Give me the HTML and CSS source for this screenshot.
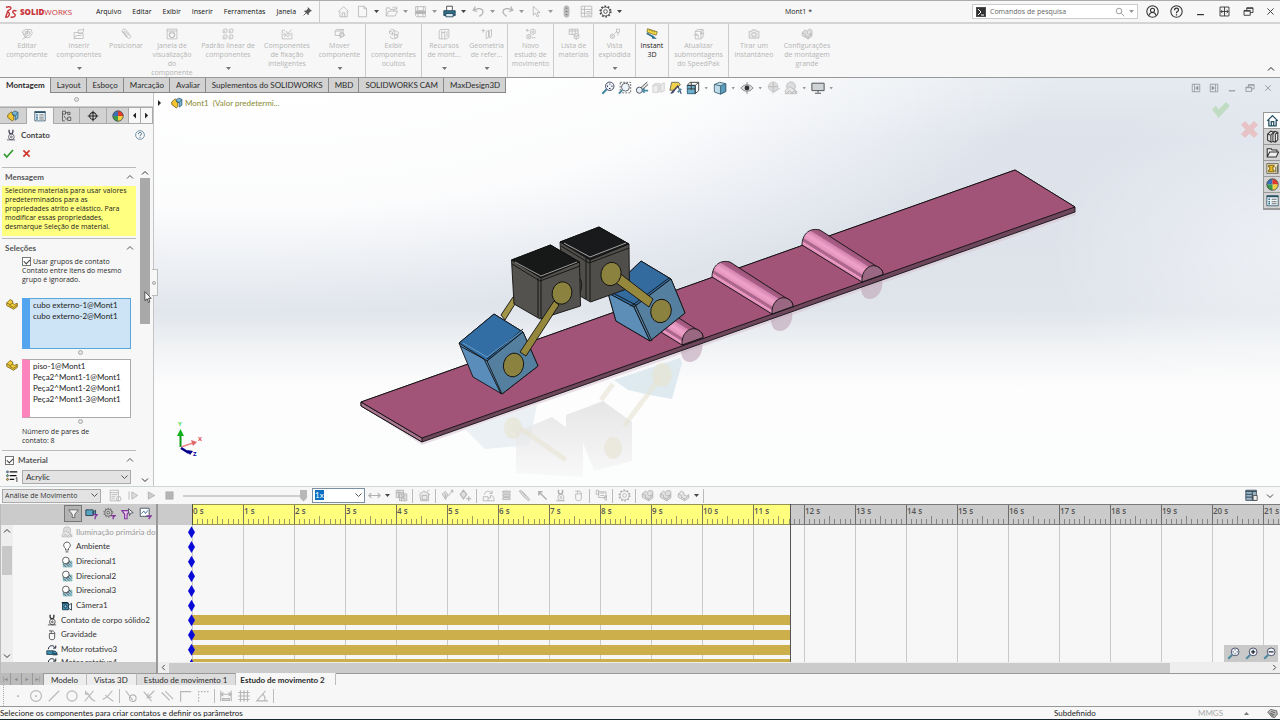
FILE: index.html
```html
<!DOCTYPE html>
<html lang="pt-BR">
<head>
<meta charset="utf-8">
<title>SOLIDWORKS - Mont1</title>
<link rel="stylesheet" href="styles.css">
</head>
<body>
<svg class="sprite" aria-hidden="true">
<defs>
<symbol id="home" viewBox="0 0 16 16"><path d="M1.500 8.500 8 2l6.500 6.500M3.500 7.500V14.500h9V7.500M6.500 14.500v-5h3v5"/></symbol>
<symbol id="new" viewBox="0 0 16 16"><path d="M3 1.500h7l3 3v10H3zM10 1.500v3h3"/></symbol>
<symbol id="open" viewBox="0 0 16 16"><path d="M1.500 13.500v-10h4l1 2h5v2M1.500 13.500l3-6h11l-3 6zM9 3.500c2-2 4-1 5 1M14.500 2v3h-3"/></symbol>
<symbol id="save" viewBox="0 0 16 16"><path d="M2 2h12v12.500H3.500L2 13zM4.500 2v5h7V2M5 14.500V10h6v4.500"/><path d="M2 7.500h12v3H2z" fill="currentColor"/></symbol>
<symbol id="print" viewBox="0 0 16 16"><path d="M4.500 7V1.500h7V7" stroke="#333" fill="#fff"/><path d="M1 7h14v6H1z" fill="#2e6f8b" stroke="#1d3c4c"/><path d="M3.500 10.500h9v4h-9z" fill="#d9ecf3" stroke="#1d3c4c"/></symbol>
<symbol id="undo" viewBox="0 0 16 16"><path d="M4 2 1.500 6.500l5 1.500M2 6.500C7 3 13 4 13.500 8c.3 3-2 4.500-4.500 6" stroke-width="1.500"/></symbol>
<symbol id="redo" viewBox="0 0 16 16"><path d="m12 2 2.500 4.500-5 1.500M14 6.500C9 3 3 4 2.500 8c-.3 3 2 4.500 4.500 6" stroke-width="1.500"/></symbol>
<symbol id="cursor" viewBox="0 0 16 16"><path d="M4 1.500v11l2.700-2.500 2 4.500 2-.8-2-4.400h3.800z"/></symbol>
<symbol id="light" viewBox="0 0 16 16"><rect x="5" y="1" width="6" height="14" rx="3" fill="#bbb"/><path d="M8 3.500v1M8 7.500v1M8 11.500v1" stroke="#777" stroke-width="2"/></symbol>
<symbol id="options" viewBox="0 0 16 16"><path d="M1.500 1.500h13v13h-13zM5.500 1.500v13M1.500 5.500h13M1.500 10h13M8 8h5M8 12.500h5"/></symbol>
<symbol id="gear" viewBox="0 0 16 16"><circle cx="8" cy="8" r="5.500"/><circle cx="8" cy="8" r="2.300"/><circle cx="8" cy="8" r="6.500" stroke-dasharray="2 2.080" stroke-width="2"/></symbol>
<symbol id="pin" viewBox="0 0 16 16"><path d="m9 1 6 6-2 .5-3 3-.5 3.500L2.500 7 6 6.500l3-3z" fill="currentColor"/><path d="m6 10-5 5" stroke-width="1.500"/></symbol>
<symbol id="glass" viewBox="0 0 16 16"><circle cx="6.500" cy="6.500" r="4.500"/><path d="m10 10 5 5"/></symbol>
<symbol id="user" viewBox="0 0 16 16"><circle cx="8" cy="8" r="7"/><circle cx="8" cy="6.500" r="2.500"/><path d="M4 13c0-5 8-5 8 0"/></symbol>
<symbol id="help" viewBox="0 0 16 16"><circle cx="8" cy="8" r="7"/><path d="M5.500 6.500c0-3.500 5-3.500 5-.5 0 2-2.500 1.500-2.500 4M8 11.500v1.500" stroke-width="1.500"/></symbol>
<symbol id="min" viewBox="0 0 16 16"><path d="M3 12.500h10" stroke-width="1.800"/></symbol>
<symbol id="span" viewBox="0 0 16 16"><path d="M1.500 1.500h13v13h-13zM8 1.500v13M3 8h10M5 5.500 2.500 8 5 10.500M11 5.500 13.500 8 11 10.500"/></symbol>
<symbol id="restore" viewBox="0 0 16 16"><path d="M1.500 6.500h9v7h-9zM5.500 6.500v-4h9v7h-4M1.500 7.500h9M5.500 3.500h9"/></symbol>
<symbol id="x" viewBox="0 0 16 16"><path d="m3.500 3.500 9 9m0-9-9 9"/></symbol>
<symbol id="chev" viewBox="0 0 16 16"><path d="m2 5 6 6 6-6"/></symbol>
<symbol id="part" viewBox="0 0 16 16"><path d="m1.500 6 4-3.500 3 2v3l3 1 3-1.500v4l-5 3.500-8-4.500z" fill="#e6e6e6"/><path d="m1.500 6 4 2v2.500l4 1.500 5-3.500M9.500 12v2.500"/></symbol>
<symbol id="parts" viewBox="0 0 16 16"><path d="m1.500 6 4-3.500 3 2v3l3 1 3-1.500v4l-5 3.500-8-4.500zM8.500 3l3-1.500 3 1.500v4l-3 1.500" fill="#dedede"/><path d="m1.500 6 4 2v2.500l4 1.500 5-3.500M9.500 12v2.500"/></symbol>
<symbol id="goldpart" viewBox="0 0 16 16"><path d="M1 6.500 5.500 2 9 4v3l2 1.500L15 7v4.500L10 15 1 10z" fill="#f3cf3a" stroke="#6b5410"/><path d="m1 6.500 4 2V10l5 2.500 5-3.500M5.500 8.500 9 7" stroke="#6b5410"/></symbol>
<symbol id="asm" viewBox="0 0 16 16"><path d="M1 6.500 5.500 2.500 9 5v8l-2 1.500-6-4.500z" fill="#f3c52f" stroke="#6b5410"/><path d="m7 3.500 3-2 4.500 1.500V11L11 13.500V8L7 6z" fill="#7db7d3" stroke="#255a76"/><path d="M7 5.500l4 2 3.500-4" stroke="#255a76"/></symbol>
<symbol id="edit" viewBox="0 0 16 16"><path d="m1.500 5 4-3h8l1.500 5-4 6-6-1zM5 4l3 4M9 3l-1 5 4-3M3 6l4 6-5 3"/><circle cx="9" cy="7" r="3"/></symbol>
<symbol id="insert" viewBox="0 0 16 16"><path d="M1.500 6h5l1 1.500h6V14h-12zM7 5V2.500h5L14 1v4l-2 1.500H7zM4 10h7M1.500 14l3-4"/></symbol>
<symbol id="clip" viewBox="0 0 16 16"><path d="m3 4 7 9c2 2 5 0 4-2.500L8 2.500C6 0 2 2 3 5l6 7.500M12 10 7 4.500C6 3.500 5 4.500 5.500 5.500l4.500 6"/></symbol>
<symbol id="window" viewBox="0 0 16 16"><path d="M1.500 1.500h13v13h-13zM1.500 4h13"/><path d="m5 8 3-2 3 2v3l-3 2-3-2z"/><circle cx="8" cy="9" r="4"/></symbol>
<symbol id="pattern" viewBox="0 0 16 16"><path d="M1.500 2.500l2-1h3v4l-2 1h-3zM9.500 2.500l2-1h3v4l-2 1h-3zM1.500 10.500l2-1h3v4l-2 1h-3zM9.500 10.500l2-1h3v4l-2 1h-3zM3.500 3.500v2M11.500 3.500v2M3.500 11.500v2M11.500 11.500v2"/></symbol>
<symbol id="fix" viewBox="0 0 16 16"><path d="M1.500 3v11.500h13V6.500M1.500 3h4M4 6l3 3M7 4l2 4 5-6M9 8h4M4 12l3-3 2 3 3-3M3 9h3"/></symbol>
<symbol id="move" viewBox="0 0 16 16"><path d="M1.500 4 4 2h8.500v3M1.500 4h8v6h-8zM9.500 4l3-2M12.500 8H9M7 13.500l7.500-4-2-2v-2"/><circle cx="10" cy="9" r="3"/></symbol>
<symbol id="hide" viewBox="0 0 16 16"><path d="m2 4 3-2.500L9 3v4L6 9 2 7zM2 4l4 1.500V9M6 5.500 9 3M3 11c0 3 4 4 7 3l3-3M10 4c3 0 4 2 4 4l-3 2-3-2"/><circle cx="11" cy="11" r="2.500"/></symbol>
<symbol id="feat" viewBox="0 0 16 16"><path d="M1.500 3.500 4 2h10.500v10L12 14.500H1.500zM5 3.500v11M9 3.500v11M5 6h4M12 4v8"/></symbol>
<symbol id="speed" viewBox="0 0 16 16"><path d="M3 4.500 6 2h7.500v10l-3 2.500H3zM3 4.500h7.500v10M10.500 4.500l3-2.500M1 9h5M4 7l2 2-2 2M15 7h-5M12 5l-2 2 2 2M7 9v4"/></symbol>
<symbol id="geom" viewBox="0 0 16 16"><path d="M3 1v5M.500 3.500h5M7 5l3-2v9l-3 2.500zM11 4l3-2v9l-3 2.500z"/></symbol>
<symbol id="gears" viewBox="0 0 16 16"><circle cx="10.500" cy="5" r="3.500"/><circle cx="10.500" cy="5" r="1.200"/><circle cx="5" cy="11.500" r="3"/><circle cx="5" cy="11.500" r="1"/><path d="M1.500 3h4M4 1.500 1.500 3 4 4.500M9 13h5"/></symbol>
<symbol id="bom" viewBox="0 0 16 16"><path d="M1.500 1.500h12v7h-12zM1.500 4h12M5.500 1.500v7M9.500 1.500v7"/><path d="m8 9 3-2 3.500 2v4L11 15l-3-2z" fill="#eee"/><path d="m8 9 3 2 3.500-2M11 11v4"/></symbol>
<symbol id="explode" viewBox="0 0 16 16"><circle cx="4.500" cy="11" r="3"/><circle cx="4.500" cy="11" r="1"/><path d="m7 8 4-4M10 1.500h4v4l-2 1-2-1zM12 6v4"/></symbol>
<symbol id="instant" viewBox="0 0 16 16"><path d="m2 1 13 4-1.500 4.500-12-4z" fill="#f7dc4a" stroke="#7a6a1c"/><path d="M5 2v2M8 3v2M11 4v2" stroke="#7a6a1c"/><path d="m1 7 9 5" stroke="#2b6e91" stroke-width="2"/><path d="m9 9.500 5.500 5-7-.5z" fill="#2b6e91" stroke="none"/></symbol>
<symbol id="camera" viewBox="0 0 16 16"><path d="M1.500 4.500h3l1-2h5l1 2h3v9h-13z" fill="#e9e9e9"/><circle cx="8" cy="9" r="3"/></symbol>
<symbol id="wizard" viewBox="0 0 16 16"><path d="M2 6.500 7 2.500l6 3v9H3.500zM5 8h6v5H5zM11 3l3-1.500M12 6l3 1M2 4 1 3" fill="#e9e9e9"/></symbol>
<symbol id="zoomc" viewBox="0 0 16 16"><circle cx="10" cy="6" r="4.800" fill="#eef5f8" stroke="#335"/><path d="m6.500 9.500-5 5" stroke="#4d8aa3" stroke-width="2.500"/><path d="M10 3.500v5M7.500 6h5" stroke="#223" stroke-width="1.500"/></symbol>
<symbol id="zoomfit" viewBox="0 0 16 16"><circle cx="10" cy="6" r="4.800" fill="#eef5f8" stroke="#335"/><path d="m6.500 9.500-5 5" stroke="#4d8aa3" stroke-width="2.500"/><path d="M10 3v1M10 8v1M7 6h1M12 6h1" stroke="#223" stroke-width="1.500"/></symbol>
<symbol id="zoomout" viewBox="0 0 16 16"><circle cx="10" cy="6" r="4.800" fill="#eef5f8" stroke="#335"/><path d="m6.500 9.500-5 5" stroke="#4d8aa3" stroke-width="2.500"/><path d="M7 6h6" stroke="#223" stroke-width="1.500"/></symbol>
<symbol id="zoomarea" viewBox="0 0 16 16"><path d="M2.500 1.500h12v12h-12z" stroke="#555" stroke-dasharray="2 1.500"/><circle cx="8.500" cy="7" r="4.500" fill="#eef5f8" stroke="#556"/><path d="m5 10.500-4 4" stroke="#4d8aa3" stroke-width="2.200"/></symbol>
<symbol id="prev" viewBox="0 0 16 16"><path d="M14 1 5 9l2 2 8-7" fill="#ddd" stroke="#555"/><circle cx="5" cy="10.500" r="3.500" fill="#e4f0f6" stroke="#445"/><path d="M15 11H9M11 8.500 8.500 11l2.500 2.500" stroke="#4d8aa3" stroke-width="1.800"/></symbol>
<symbol id="section" viewBox="0 0 16 16"><path d="M1 5h6v8H1zM1 5l2-2h6v8l-2 2M10 4l4-2v9l-4 2z" fill="#eee" stroke="#ccc"/></symbol>
<symbol id="views" viewBox="0 0 16 16"><path d="M3 1.500h8l2 3-7 6H1z" fill="#f2d24a" stroke="#665"/><path d="m2 14.500 8-9 4 9M8 8l-4 6" stroke="#446" stroke-width="1.300"/><path d="m10 13 4-4" stroke="#4d8aa3" stroke-width="2"/></symbol>
<symbol id="orient" viewBox="0 0 16 16"><path d="M1.500 5h9v9.500h-9z" fill="#6fb0cd" stroke="#255a76"/><path d="m1.500 5 3-3.500h10V11l-4 3.500V5zM10.500 5l4-3.500M6 1.500V10M1.500 9h9" stroke="#333"/></symbol>
<symbol id="display" viewBox="0 0 16 16"><path d="m1.500 4 6-2.500 7 1.500v9l-6 3-7-2.500z" fill="#bfdde9" stroke="#3c6277"/><path d="M8.500 5.500v9.500l6-3V3z" fill="#5a9cba" stroke="#3c6277"/><path d="m1.500 4 7 1.500" stroke="#3c6277"/></symbol>
<symbol id="eye" viewBox="0 0 16 16"><path d="M1 8c4-5 10-5 14 0-4 5-10 5-14 0z" fill="#ddd" stroke="#777"/><circle cx="8" cy="8" r="2.800" fill="#333" stroke="none"/><path d="M8 1v3M8 12v3" stroke="#888"/></symbol>
<symbol id="sphere" viewBox="0 0 16 16"><circle cx="7" cy="6.500" r="5.500" fill="#ddd" stroke="#ccc"/><path d="M7 1v11M1.500 6.500h11M6 14l9-6" stroke="#bbb"/></symbol>
<symbol id="scene" viewBox="0 0 16 16"><circle cx="8" cy="6" r="5" fill="#ddd" stroke="#bbb"/><path d="M1.500 14.500v-4l5-4 8 5v3z" fill="#e6e6e6" stroke="#bbb"/><path d="m3 14 3-3 3 3 3-3 2 3" stroke="#aaa"/></symbol>
<symbol id="monitor" viewBox="0 0 16 16"><path d="M1 2.500h14v8.500H1z" fill="#cfd4d6" stroke="#444"/><path d="M8 11v2.500M4.500 14h7" stroke="#444"/></symbol>
<symbol id="paneL" viewBox="0 0 16 16"><path d="M2 2h12v12H2zM5.500 2v12"/><path d="M11 5v6L7.500 8z" fill="currentColor"/></symbol>
<symbol id="paneR" viewBox="0 0 16 16"><path d="M2 2h12v12H2zM10.500 2v12"/><path d="M5 5v6l3.500-3z" fill="currentColor"/></symbol>
<symbol id="props" viewBox="0 0 16 16"><path d="M1 2h14v12.500H1z" fill="#eef6fa" stroke="#2e5266"/><path d="M1 3h14" stroke="#2e5266" stroke-width="2"/><path d="M3 6.500h2M3 9.500h2M3 12h2" stroke="#2b6e91" stroke-width="2"/><path d="M7 6.500h6M7 9.500h6M7 12h6" stroke="#555"/></symbol>
<symbol id="config" viewBox="0 0 16 16"><path d="M2 1.500h4v4H2zM9 3h3v3H9zM9 9.500h4v4.500H9zM2 5.500v9h3M6 3.500h3M6 12h3M4 8l2 3" stroke="#444"/></symbol>
<symbol id="target" viewBox="0 0 16 16"><circle cx="8" cy="8" r="4.500" stroke="#222" stroke-width="1.400"/><path d="M8 1v14M1 8h14" stroke="#222" stroke-width="1.400"/></symbol>
<symbol id="ball" viewBox="0 0 16 16"><g stroke="none"><path d="M8 8V1a7 7 0 0 0-7 7z" fill="#3a70b8"/><path d="M8 8V1a7 7 0 0 1 7 7z" fill="#e23b2e"/><path d="M8 8h7a7 7 0 0 1-7 7z" fill="#efd13d"/><path d="M8 8H1a7 7 0 0 0 7 7z" fill="#3c9a4b"/></g><circle cx="8" cy="8" r="7" stroke="#444"/></symbol>
<symbol id="contact" viewBox="0 0 16 16"><path d="M5.500 1v3c0 3 5 3 5 0V1" stroke-width="1.800"/><circle cx="8.500" cy="10.500" r="3.800"/><circle cx="8.500" cy="10.500" r="1.200"/><path d="M2.500 14.500h11"/></symbol>
<symbol id="check" viewBox="0 0 16 16"><path d="m1.500 8.500 4 4.500 9-10" stroke-width="2.400"/></symbol>
<symbol id="mat" viewBox="0 0 16 16"><path d="M5 2.500h10M5 7.500h9M5 12.500h6" stroke="#111" stroke-width="1.500"/><circle cx="2" cy="2.500" r="1.300" fill="#8ac" stroke="#345"/><circle cx="2" cy="7.500" r="1.300" fill="#6c6" stroke="#345"/><circle cx="2" cy="12.500" r="1.300" fill="#dc4" stroke="#543"/><path d="m13 11 1.500-1v6" stroke="#111"/></symbol>
<symbol id="books" viewBox="0 0 16 16"><path d="m2 5 4-3.500 3 1 2-1 3.500 1.500v9l-3 3-3-1-2 1L2 12.500zM2 5l4 1.500v8M8.500 5.500v9M11.500 5v10M6 6.500l3-4M8.500 5.500l2.500-4M11.500 5l3-2" fill="#e8e8e8" stroke-width="1.300"/></symbol>
<symbol id="folder" viewBox="0 0 16 16"><path d="M1.500 13.500v-10h5l1 1.500h6v2.500M1.500 13.500l3-6H15.500l-3 6z" fill="#eee" stroke-width="1.300"/></symbol>
<symbol id="palette" viewBox="0 0 16 16"><path d="M1 2h14v12H1z" fill="#f5ecc0" stroke="#555"/><path d="M3 4h7v2H8.500v4H10v2H3v-2h1.500V6H3z" fill="#e6b824" stroke="#6b5410"/><path d="M12 6v7M14 4v9" stroke="#444"/></symbol>
<symbol id="calc" viewBox="0 0 16 16"><path d="M1.500 1.500h10v13h-10zM1.500 4.500h10M3 7h7M3 9.500h5M3 12h4"/><circle cx="12" cy="12" r="2.800"/></symbol>
<symbol id="playstart" viewBox="0 0 16 16"><path d="M2.500 3v10"/><path d="m6 3.500 7 4.500-7 4.500z" fill="#ddd"/></symbol>
<symbol id="play" viewBox="0 0 16 16"><path d="m4 3.500 8 4.500-8 4.500z" fill="#ccc"/></symbol>
<symbol id="stop" viewBox="0 0 16 16"><path d="M3.500 3.500h9v9h-9z" fill="#b4b4b4"/></symbol>
<symbol id="range" viewBox="0 0 16 16"><path d="M1 8h14M4 5 1 8l3 3M12 5l3 3-3 3" stroke-width="1.400"/></symbol>
<symbol id="film" viewBox="0 0 16 16"><path d="M1.500 1.500h9v9h-9zM4.500 1.500v9M1.500 4.500h9M5.500 6h9v8.500h-9zM8 6v3h4V6M8 14.500v-3h4v3" fill="#e2e2e2"/></symbol>
<symbol id="key1" viewBox="0 0 16 16"><path d="m1.500 6 4-3 3 4-3 6zM9 9l5-7.500M12 1.500h2.500v3M5.500 6v5" fill="#ddd"/></symbol>
<symbol id="key2" viewBox="0 0 16 16"><path d="m5.500 1.500 4 5-4 6-4-6zM12 9v6M9 12h6" fill="#ddd" stroke-width="1.300"/></symbol>
<symbol id="motor" viewBox="0 0 16 16"><path d="M1.500 9.500h6v5h-6zM7.500 11h3V8c3 0 4.500 2 4.500 6.500H7.500M3 7c0-4 6-6 9-2M12.500 2v3.500H9"/></symbol>
<symbol id="motorc" viewBox="0 0 16 16"><path d="M1 9h8v5H1zM9 9c4 0 6 2 6 5.500H9" fill="#3a8fab" stroke="#234"/><path d="M3 7c1-6 7-6 9-2M13 2v3.500H9.500M10 12l2 2 2-2" stroke="#123" stroke-width="1.300"/></symbol>
<symbol id="spring" viewBox="0 0 16 16"><path d="M3.500 2.500h9v2.500h-9zM3.500 6.500h9V9h-9zM3.500 10.500h9V13h-9z" fill="#ddd"/></symbol>
<symbol id="damper" viewBox="0 0 16 16"><path d="m1.500 2.500 2-1 6 6 5 5.500-1.500 1.500-6-5zM5 3l5 6" fill="#ddd"/></symbol>
<symbol id="force" viewBox="0 0 16 16"><path d="m13 13-9-9M3.500 8V3.500H8" stroke-width="1.800"/></symbol>
<symbol id="gravity" viewBox="0 0 16 16"><path d="M4.500 6h7v6c0 3-7 3-7 0zM4 2.500h3v3M12 6c-1-3-3-4-5-3.500"/></symbol>
<symbol id="results" viewBox="0 0 16 16"><path d="M1.500 1.500h3v5h-3zM4.500 3.500h9v7h-9zM6.500 5h5M6.500 8h5M11 10l3-2v6l-3-2z"/></symbol>
<symbol id="studyp" viewBox="0 0 16 16"><path d="M1 1.500h13V14H1z" fill="#9ab6c4" stroke="#345"/><path d="M1 3h13M1 6.500h8M1 10h8M9 3v11" stroke="#234"/><path d="M10 8h5v6h-5z" fill="#eee" stroke="#444"/></symbol>
<symbol id="funnel" viewBox="0 0 16 16"><path d="M2 3.500h12L9.500 9v4h-3V9z" fill="#f4f4f4" stroke="#555"/></symbol>
<symbol id="funcam" viewBox="0 0 16 16"><path d="M1 3.500h9v7H1zM10 6l3-2v6l-3-2z" fill="#57a5c1" stroke="#234"/><path d="M9 9.500h6l-2.500 3V15" stroke="#83369e" stroke-width="1.600"/></symbol>
<symbol id="fungear" viewBox="0 0 16 16"><circle cx="6.500" cy="7" r="4.500" stroke="#555"/><circle cx="6.500" cy="7" r="5.500" stroke="#555" stroke-dasharray="1.500 2"/><circle cx="6.500" cy="7" r="1.800" stroke="#555"/><path d="M9.500 10.500h5.500l-2.500 2V15" stroke="#83369e" stroke-width="1.600"/></symbol>
<symbol id="funsel" viewBox="0 0 16 16"><path d="M1 4.500h10L7.500 9v5.500h-3V9z" fill="#e7cbed" stroke="#83369e" stroke-width="1.400"/><path d="m9 2 6 5-3 .5-1.500 3z" fill="#fff" stroke="#445"/></symbol>
<symbol id="funres" viewBox="0 0 16 16"><path d="M1.500 1.500h11v10h-11z" fill="#fff" stroke="#345"/><path d="m3 8 3-3 2 3 3-4" stroke="#258"/><path d="M9 11h6l-2.500 2.500V15" stroke="#83369e" stroke-width="1.600"/></symbol>
<symbol id="bulb" viewBox="0 0 16 16"><path d="M6 12V10C1.500 6 4 1.500 8 1.500S14.500 6 10 10v2zM6 14.500h4" stroke="#333" fill="#fff"/></symbol>
<symbol id="dir" viewBox="0 0 16 16"><path d="M3 7h11.500v7.500H3z" fill="#9fd0e4" stroke="#6aa"/><circle cx="6.500" cy="6" r="4.500" fill="#fff" stroke="#333"/><path d="m6 10 5 4M8 8.500l5 4M10 6l4 4M3 11l4 3.500" stroke="#444"/></symbol>
<symbol id="cam" viewBox="0 0 16 16"><path d="M2 4h8v9H2z" fill="#3a8fab" stroke="#123"/><path d="M1 3.500h8" stroke="#123" stroke-width="1.600"/><path d="m10 7 4-2.500v9L10 11z" fill="#e2f2f8" stroke="#123"/><circle cx="6" cy="8.500" r="2" fill="#8bd" stroke="#123"/></symbol>
<symbol id="point" viewBox="0 0 16 16"><path d="M7 8h2" stroke-width="2"/></symbol>
<symbol id="circ" viewBox="0 0 16 16"><circle cx="8" cy="8" r="5.800"/></symbol>
<symbol id="circc" viewBox="0 0 16 16"><circle cx="8" cy="8" r="6.200"/><path d="M7 8h2" stroke-width="2"/></symbol>
<symbol id="line" viewBox="0 0 16 16"><path d="M2 14 14 2"/></symbol>
<symbol id="inter" viewBox="0 0 16 16"><path d="m2 14 5-6 5-6M3 4c3 0 4 3 5 5s3 4 6 5M3 2v4h4"/></symbol>
<symbol id="angle" viewBox="0 0 16 16"><path d="M13 2 7 9l-5 3M7 9l7 5M5 7l2 2"/></symbol>
<symbol id="tan" viewBox="0 0 16 16"><circle cx="10" cy="10.500" r="3.800"/><path d="m2 2 8 11"/></symbol>
<symbol id="perp" viewBox="0 0 16 16"><path d="m2 3 9 11M14 2 7 9M7 5l-1 5 5-1"/></symbol>
<symbol id="para" viewBox="0 0 16 16"><path d="m2 4 9 9M6 2.500l9 9"/></symbol>
<symbol id="corner" viewBox="0 0 16 16"><path d="M3 14.500V3h12"/></symbol>
<symbol id="dots" viewBox="0 0 16 16"><path d="M3 14.500V3h12" stroke-dasharray="2 1.500"/></symbol>
<symbol id="dim" viewBox="0 0 16 16"><path d="M2 2v12M14 2v12M2 6h12M4 11h8v2H4zM5 4 2 6l3 2M11 4l3 2-3 2"/></symbol>
<symbol id="gridi" viewBox="0 0 16 16"><path d="M4 1.500v13M8 1.500v13M12 1.500v13M1.500 4h13M1.500 8h13M1.500 12h13"/></symbol>
<symbol id="ang" viewBox="0 0 16 16"><path d="M12 2 2 13.500h13M9 6c2 2 3 5 2 7.500"/></symbol>
<symbol id="tag" viewBox="0 0 16 16"><path d="m1 6 4-4 9 2 1 5-4 5-4-1z" fill="#bbb" stroke="#444"/><path d="m4 7 7 3M6 5l6 2M5 9l5 3" stroke="#444"/></symbol>
<pattern id="tickmarks" width="51" height="21" patternUnits="userSpaceOnUse">
<path d="M5.500 15v5M10.500 15v5M15.500 15v5M20.500 15v5M30.500 15v5M36.500 15v5M41.500 15v5M46.500 15v5M25.500 12v8" stroke="#555" stroke-opacity=".6" fill="none"/><path d="M.5 1v19" stroke="#555" stroke-opacity=".8"/>
</pattern>
</defs>
</svg>

<header class="titlebar">
<a class="brand" href="#" aria-label="SOLIDWORKS"><svg class="ds" viewBox="0 0 14 14"><path d="M2 2.500c3-1.500 6-.5 4.500 1.500L3 6.500M1.500 12.500 3.500 7c3 0 2.500 5-2 5.500M12.500 6C9 4.500 7.500 7 10 8.500S11 13 6.500 12"/></svg><b>SOLID</b><span>WORKS</span></a>
<nav class="menus"><button>Arquivo</button><button>Editar</button><button>Exibir</button><button>Inserir</button><button>Ferramentas</button><button>Janela</button></nav>
<button class="pin" aria-label="Fixar"><svg><use href="#pin"/></svg></button>
<div class="quick">
<button class="qi home" aria-label="Início"><svg><use href="#home"/></svg></button>
<button class="qi" aria-label="Novo"><svg><use href="#new"/></svg></button><i class="caret dark"></i>
<button class="qi" aria-label="Abrir"><svg><use href="#open"/></svg></button><i class="caret"></i>
<button class="qi" aria-label="Salvar"><svg><use href="#save"/></svg></button><i class="caret"></i>
<button class="qi" aria-label="Imprimir"><svg><use href="#print"/></svg></button><i class="caret dark"></i>
<button class="qi" aria-label="Desfazer"><svg><use href="#undo"/></svg></button><i class="caret"></i>
<button class="qi" aria-label="Refazer"><svg><use href="#redo"/></svg></button><i class="caret"></i>
<button class="qi" aria-label="Selecionar"><svg><use href="#cursor"/></svg></button><i class="caret"></i>
<button class="qi wide" aria-label="Reconstruir"><svg><use href="#light"/></svg></button>
<button class="qi wide" aria-label="Propriedades"><svg><use href="#options"/></svg></button>
<button class="qi dark" aria-label="Opções"><svg><use href="#gear"/></svg></button><i class="caret dark"></i>
</div>
<h1 class="doc">Mont1 *</h1>
<label class="search"><svg class="cmd" viewBox="0 0 10 10"><rect width="10" height="10" fill="#333"/><path d="m2 2 3 3-3 3M5 8h3" stroke="#fff"/></svg><input type="text" placeholder="Comandos de pesquisa" aria-label="Comandos de pesquisa"><svg class="lens"><use href="#glass"/></svg><i class="caret"></i></label>
<div class="winbtns">
<button aria-label="Usuário"><svg class="big"><use href="#user"/></svg></button><button aria-label="Ajuda"><svg class="big"><use href="#help"/></svg></button><button aria-label="Minimizar"><svg><use href="#min"/></svg></button><button aria-label="Expandir"><svg><use href="#span"/></svg></button><button aria-label="Restaurar"><svg><use href="#restore"/></svg></button><button aria-label="Fechar"><svg><use href="#x"/></svg></button>
</div>
</header>

<section class="ribbon">
<button class="w54"><svg><use href="#edit"/></svg><span>Editar<br>componente</span></button>
<button class="w50"><svg><use href="#insert"/></svg><span>Inserir<br>componentes</span><i class="caret"></i></button>
<button class="w44"><svg><use href="#clip"/></svg><span>Posicionar</span></button>
<button class="w48"><svg><use href="#window"/></svg><span>Janela de<br>visualização<br>do<br>componente</span></button>
<button class="w64"><svg><use href="#pattern"/></svg><span>Padrão linear de<br>componentes</span><i class="caret"></i></button>
<button class="w54"><svg><use href="#fix"/></svg><span>Componentes<br>de fixação<br>inteligentes</span></button>
<button class="w52 end"><svg><use href="#move"/></svg><span>Mover<br>componente</span><i class="caret"></i></button>
<button class="w56 end"><svg><use href="#hide"/></svg><span>Exibir<br>componentes<br>ocultos</span></button>
<button class="w44"><svg><use href="#feat"/></svg><span>Recursos<br>de mont...</span><i class="caret"></i></button>
<button class="w42 end"><svg><use href="#geom"/></svg><span>Geometria<br>de refer...</span><i class="caret"></i></button>
<button class="w46 end"><svg><use href="#gears"/></svg><span>Novo<br>estudo de<br>movimento</span></button>
<button class="w40 end"><svg><use href="#bom"/></svg><span>Lista de<br>materiais</span></button>
<button class="w42 end"><svg><use href="#explode"/></svg><span>Vista<br>explodida</span><i class="caret"></i></button>
<button class="w33 end on"><svg><use href="#instant"/></svg><span>Instant<br>3D</span></button>
<button class="w60 end"><svg><use href="#speed"/></svg><span>Atualizar<br>submontagens<br>do SpeedPak</span></button>
<button class="w50"><svg><use href="#camera"/></svg><span>Tirar um<br>instantâneo</span></button>
<button class="w56"><svg><use href="#parts"/></svg><span>Configurações<br>de montagem<br>grande</span></button>
<button class="collapse" aria-label="Recolher"><svg><use href="#chev"/></svg></button>
</section>

<main class="stage">
<svg class="model" viewBox="0 78 1280 408" preserveAspectRatio="xMinYMin slice" role="img" aria-label="Modelo 3D">
<defs>
<linearGradient id="sky" x1="0" y1="0" x2="0" y2="1"><stop offset="0" stop-color="#e6ebf0"/><stop offset=".15" stop-color="#dde2eb"/><stop offset=".4" stop-color="#dee3eb"/><stop offset=".57" stop-color="#e0e5eb"/><stop offset=".66" stop-color="#f1f3f5"/><stop offset=".76" stop-color="#fdfdfd"/><stop offset="1" stop-color="#fcfdfd"/></linearGradient>
<radialGradient id="glow" gradientUnits="userSpaceOnUse" cx="0" cy="0" r="1" gradientTransform="matrix(780 -40 60 235 280 80)"><stop offset="0" stop-color="#fff"/><stop offset=".55" stop-color="#fff" stop-opacity=".9"/><stop offset="1" stop-color="#fff" stop-opacity="0"/></radialGradient>
<radialGradient id="glow2" gradientUnits="userSpaceOnUse" cx="0" cy="0" r="1" gradientTransform="matrix(240 0 0 170 1290 250)"><stop offset="0" stop-color="#fff" stop-opacity=".45"/><stop offset="1" stop-color="#fff" stop-opacity="0"/></radialGradient>
<linearGradient id="tube" gradientUnits="userSpaceOnUse" x1="846" y1="246" x2="833" y2="267"><stop offset="0" stop-color="#9c5379"/><stop offset=".22" stop-color="#a95f87"/><stop offset=".24" stop-color="#d283ae"/><stop offset=".45" stop-color="#f0a3ca"/><stop offset=".62" stop-color="#e192bb"/><stop offset=".66" stop-color="#a96288"/><stop offset=".76" stop-color="#b26b91"/><stop offset=".78" stop-color="#ef9cc8"/><stop offset=".88" stop-color="#dc8db5"/><stop offset=".91" stop-color="#a5587f"/><stop offset="1" stop-color="#9c5076"/></linearGradient>
<linearGradient id="fade" x1="0" y1="0" x2="0" y2="1"><stop offset="0" stop-color="#dcdcde"/><stop offset="1" stop-color="#f6f6f7"/></linearGradient>
<g id="bump"><path d="M802 245C802 236 808 227 820 230L876 266C881 268 883 271 883 274.500L862 282z" fill="url(#tube)"/><path d="M862 282C861 271 869 264 876 266 881 268 883 271 883 274.500z" fill="#9b6884"/></g>
</defs>
<rect y="78" width="1280" height="408" fill="url(#sky)"/><rect y="78" width="1280" height="408" fill="url(#glow)"/><rect y="78" width="1280" height="408" fill="url(#glow2)"/>
<path d="m363 407 59 38 654-230v-5L422 440z" fill="#d9c3d1" opacity=".55"/>
<g fill="#bfa3b7" opacity=".6"><path d="M861 286l21-7c2 12-5 20-12 20s-9-6-9-13M771 318l21-7c2 12-5 20-12 20s-9-6-9-13M681 349l21-7c2 12-5 20-12 20s-9-6-9-13"/></g>
<path d="m614 380 66-22 2 5-10 36-22-4-22-5z" fill="#dfeaf0"/><path d="m465 429 72-24-8 40-44 4z" fill="#eaf0f3"/>
<path d="m566 415 37-14 29 21v39l-38 10-11-28-17-16zM516 432l36-15 31 23v37l-67-4z" fill="url(#fade)" opacity=".7"/>
<path d="m613 384-12 16M660 378l-36 48M520 428l46 32" stroke="#e8e5d4" stroke-width="5" opacity=".6"/><g fill="#e8e4d0" opacity=".6"><ellipse cx="662" cy="375" rx="10" ry="12"/><ellipse cx="513" cy="428" rx="9" ry="11"/><ellipse cx="613" cy="448" rx="9" ry="11"/></g>
<g stroke="#111" stroke-width=".9" stroke-linejoin="round">
<path d="M361 402v4l61 36 653-230v-5l-60-37z" fill="#6e475d"/><path d="M361 402v4l61 36v-4z" fill="#a87892"/><path d="m361 402 654-232 60 37-653 231z" fill="#a25478"/>
<use href="#bump"/><use href="#bump" x="-90" y="32"/><use href="#bump" x="-180" y="63"/>
<path d="m513 297-12 18 4 5 15-24z" fill="#a39548"/>
<path d="m608 293 33-32 30 18 14 34-35 28-34-20z" fill="#5b8dba"/><path d="m608 293 33-32 30 18-37 28z" fill="#336b9f"/><path d="m608 293 26 14 16 34-34-20z" fill="#5c8eb8"/><path d="m634 307 37-28 14 34-35 28z" fill="#557f9f"/><path d="m630 306 5-2 17 37M611 292l23 12 35-26" fill="none"/>
<path d="m560 242 39-15 30 17 .5 44-39 14-28-16z" fill="#4f4e4a"/><path d="m560 242 39-15 30 17-39 16z" fill="#191a1b"/><path d="M590 260v41M586 258v41M561 246l28 17 40-15M579 278c4 2 3 13 0 15" fill="none"/><path d="m564 243 26 14 36-14" stroke="#b4b4b0" fill="none"/>
<path d="m511.500 260 39-15 29 17 1 44-40.500 13-26-15z" fill="#53524e"/><path d="m511.500 260 39-15 29 17-38.500 16z" fill="#171818"/><path d="M541 278v40M538 278v39M512 264l28 17 40-15" fill="none"/><path d="m515 262 26 14 36-14" stroke="#aaa9a5" fill="none"/>
<path d="m459 343 35-29 29 18 15 34-36 28-29-17z" fill="#5b8dba"/><path d="m459 343 35-29 29 18-36 29z" fill="#326da3"/><path d="m487 361 36-29 15 34-36 28z" fill="#557f9f"/><path d="m460 346 24 13 17 35M487 359l36-30" fill="none"/><path d="m463 343 24 14 35-26" stroke="#6ca0c7" fill="none"/>
<path d="m554 301-34 51 6 4 33-51z" fill="#95873c"/><path d="m618 272 35 27-4 8-34-25z" fill="#95873c"/>
<g fill="#8c823f"><ellipse cx="562" cy="293" rx="9.800" ry="11.300" transform="rotate(15 562 293)"/><ellipse cx="513.500" cy="365" rx="10" ry="12" transform="rotate(15 513.500 365)"/><ellipse cx="611" cy="274" rx="10" ry="11.800" transform="rotate(15 611 274)"/><ellipse cx="661" cy="311" rx="10.200" ry="11.800" transform="rotate(15 661 311)"/></g>
</g>
<g fill="none"><path d="M180.500 447v-13" stroke="#0a9a14" stroke-width="2"/><path d="m177 436 3.500-7 3.500 7z" fill="#10b01c"/><path d="m181 447 12-4" stroke="#e88" stroke-width="1.500"/><path d="m191 440 6 2-4 4z" fill="#d66"/><path d="m181 448 8 5" stroke="#00008b" stroke-width="2.500"/><path d="m187 450 6 1-3 4z" fill="#00008b"/></g>
<g class="axis"><text x="178" y="426" fill="#5d5">Y</text><text x="198" y="441" fill="#d44">X</text><text x="193" y="456" fill="#00a">Z</text></g>
</svg>

<div class="toprow">
<nav class="cmdtabs"><button class="sel">Montagem</button><button>Layout</button><button>Esboço</button><button>Marcação</button><button>Avaliar</button><button>Suplementos do SOLIDWORKS</button><button>MBD</button><button>SOLIDWORKS CAM</button><button>MaxDesign3D</button></nav>
<div class="hud">
<button aria-label="Zoom"><svg><use href="#zoomfit"/></svg></button><button aria-label="Zoom na área"><svg><use href="#zoomarea"/></svg></button><button aria-label="Vista anterior"><svg><use href="#prev"/></svg></button><button aria-label="Seção"><svg><use href="#section"/></svg></button><button aria-label="Vistas"><svg><use href="#views"/></svg></button><button aria-label="Orientação"><svg><use href="#orient"/></svg></button><i class="caret"></i><button aria-label="Estilo"><svg><use href="#display"/></svg></button><i class="caret"></i><button aria-label="Ocultar"><svg><use href="#eye"/></svg></button><i class="caret"></i><button aria-label="Aparência"><svg><use href="#sphere"/></svg></button><button aria-label="Cena"><svg><use href="#scene"/></svg></button><i class="caret"></i><button aria-label="Exibição"><svg><use href="#monitor"/></svg></button><i class="caret"></i>
</div>
<div class="docbtns"><button aria-label="Painel esquerdo"><svg><use href="#paneL"/></svg></button><button aria-label="Painel direito"><svg><use href="#paneR"/></svg></button><button aria-label="Minimizar documento"><svg><use href="#min"/></svg></button><button aria-label="Restaurar documento"><svg><use href="#restore"/></svg></button><button aria-label="Fechar documento"><svg><use href="#x"/></svg></button></div>
</div>

<div class="work">
<aside class="panel">
<div class="grip"><i class="dot"></i></div>
<nav class="ptabs"><button aria-label="Árvore"><svg><use href="#asm"/></svg></button><button class="sel" aria-label="Propriedades"><svg><use href="#props"/></svg></button><button aria-label="Configurações"><svg><use href="#config"/></svg></button><button aria-label="DimXpert"><svg><use href="#target"/></svg></button><button aria-label="Exibição"><svg><use href="#ball"/></svg></button><button class="arr" aria-label="Anterior"><i class="tri l"></i></button><button class="arr" aria-label="Próximo"><i class="tri"></i></button></nav>
<div class="ptitle"><svg><use href="#contact"/></svg><h2>Contato</h2><button aria-label="Ajuda"><svg><use href="#help"/></svg></button></div>
<div class="okrow"><button class="ok" aria-label="OK"><svg><use href="#check"/></svg></button><button class="no" aria-label="Cancelar"><svg><use href="#x"/></svg></button></div>
<div class="pscroll">
<div class="pbody">
<section class="msgsec"><h3>Mensagem<svg class="up"><use href="#chev"/></svg></h3>
<p class="msg">Selecione materiais para usar valores<br>predeterminados para as<br>propriedades atrito e elástico. Para<br>modificar essas propriedades,<br>desmarque Seleção de material.</p></section>
<section class="selsec"><h3>Seleções<svg class="up"><use href="#chev"/></svg></h3>
<label class="chk"><input type="checkbox" checked>Usar grupos de contato</label>
<p class="note">Contato entre itens do mesmo<br>grupo é ignorado.</p>
<div class="pick"><svg><use href="#goldpart"/></svg><ul class="blue"><li>cubo externo-1@Mont1</li><li>cubo externo-2@Mont1</li></ul></div>
<i class="dot"></i>
<div class="pick second"><svg><use href="#goldpart"/></svg><ul class="pink"><li>piso-1@Mont1</li><li>Peça2^Mont1-1@Mont1</li><li>Peça2^Mont1-2@Mont1</li><li>Peça2^Mont1-3@Mont1</li></ul></div>
<i class="dot"></i>
<p class="note">Número de pares de<br>contato: 8</p></section>
<section class="matsec"><h3><label class="chk"><input type="checkbox" checked>Material</label><svg class="up"><use href="#chev"/></svg></h3>
<div class="matrow"><svg><use href="#mat"/></svg><select aria-label="Material"><option>Acrylic</option></select></div></section>
</div>
<div class="vscroll"><svg class="up"><use href="#chev"/></svg><i></i><svg><use href="#chev"/></svg></div>
</div>
</aside>
<section class="view">
<div class="crumb"><i class="tri"></i><svg><use href="#asm"/></svg><span>Mont1&nbsp; (Valor predetermi...</span></div>
<div class="handle"><i class="dot"></i></div>
<svg class="pointer" viewBox="0 0 10 14"><path d="M1 1v10l2.500-2 1.500 4 1.500-.6-1.500-3.900h3z" fill="#fff" stroke="#222" stroke-width=".8"/></svg>
<button class="vok" aria-label="Confirmar"><svg viewBox="0 0 20 17"><path d="m1 8 4-4 3 4 8-8 4 4-12 13z" fill="#c0dcc3"/></svg></button>
<button class="vno" aria-label="Cancelar"><svg viewBox="0 0 17 17"><path d="m4 0 4.500 4.500L13 0l4 4-4.500 4.500L17 13l-4 4-4.500-4.500L4 17l-4-4 4.500-4.500L0 4z" fill="#e8c3c6"/></svg></button>
<nav class="task"><button class="sel" aria-label="Início"><svg class="teal"><use href="#home"/></svg></button><button aria-label="Biblioteca"><svg><use href="#books"/></svg></button><button aria-label="Explorador"><svg><use href="#folder"/></svg></button><button aria-label="Paleta"><svg><use href="#palette"/></svg></button><button aria-label="Aparências"><svg><use href="#ball"/></svg></button><button aria-label="Propriedades"><svg><use href="#props"/></svg></button></nav>
</section>
</div>
</main>

<section class="motion">
<div class="mtools">
<select class="study" aria-label="Tipo de estudo"><option>Análise de Movimento</option></select>
<button aria-label="Calcular"><svg><use href="#calc"/></svg></button><button aria-label="Do início"><svg><use href="#playstart"/></svg></button><button aria-label="Reproduzir"><svg><use href="#play"/></svg></button><button aria-label="Parar"><svg><use href="#stop"/></svg></button>
<input class="seek" type="range" value="100" aria-label="Tempo">
<span class="speed"><select aria-label="Velocidade"><option>1x</option></select><mark>1x</mark></span>
<button class="rng" aria-label="Modo"><svg><use href="#range"/></svg></button><i class="caret dark"></i>
<button aria-label="Salvar animação"><svg><use href="#film"/></svg></button><i class="sep"></i>
<button aria-label="Assistente"><svg><use href="#wizard"/></svg></button><i class="sep"></i>
<button aria-label="Chave automática"><svg><use href="#key1"/></svg></button><button aria-label="Adicionar chave"><svg><use href="#key2"/></svg></button><i class="sep"></i>
<button aria-label="Motor"><svg><use href="#motor"/></svg></button><button aria-label="Mola"><svg><use href="#spring"/></svg></button><button aria-label="Amortecedor"><svg><use href="#damper"/></svg></button><button aria-label="Força"><svg><use href="#force"/></svg></button><button aria-label="Contato"><svg><use href="#contact"/></svg></button><button aria-label="Gravidade"><svg><use href="#gravity"/></svg></button><i class="sep"></i>
<button aria-label="Resultados"><svg><use href="#results"/></svg></button><i class="sep"></i>
<button aria-label="Propriedades do estudo"><svg><use href="#gear"/></svg></button><i class="sep"></i>
<button aria-label="Peça"><svg><use href="#parts"/></svg></button><button aria-label="Montagem"><svg><use href="#parts"/></svg></button><button aria-label="Simulação"><svg><use href="#part"/></svg></button><i class="caret dark"></i><i class="sep"></i>
<button class="last" aria-label="Gerenciador"><svg><use href="#studyp"/></svg></button><button class="dk" aria-label="Recolher"><svg class="chv"><use href="#chev"/></svg></button>
</div>
<div class="mbody">
<aside class="tree">
<div class="filters"><button class="on" aria-label="Sem filtro"><svg><use href="#funnel"/></svg></button><button aria-label="Filtrar animados"><svg><use href="#funcam"/></svg></button><button aria-label="Filtrar condução"><svg><use href="#fungear"/></svg></button><button aria-label="Filtrar selecionados"><svg><use href="#funsel"/></svg></button><button aria-label="Filtrar resultados"><svg><use href="#funres"/></svg></button></div>
<div class="treebody">
<div class="tscroll"><svg class="up"><use href="#chev"/></svg><i></i><svg><use href="#chev"/></svg></div>
<ul class="rows">
<li class="dim"><svg><use href="#scene"/></svg>Iluminação primária do</li>
<li><svg><use href="#bulb"/></svg>Ambiente</li>
<li><svg><use href="#dir"/></svg>Direcional1</li>
<li><svg><use href="#dir"/></svg>Direcional2</li>
<li><svg><use href="#dir"/></svg>Direcional3</li>
<li><svg><use href="#cam"/></svg>Câmera1</li>
<li class="out"><svg><use href="#contact"/></svg>Contato de corpo sólido2</li>
<li class="out"><svg><use href="#gravity"/></svg>Gravidade</li>
<li class="out"><svg><use href="#motorc"/></svg>Motor rotativo3</li>
<li class="out"><svg><use href="#motorc"/></svg>Motor rotativo4</li>
</ul>
</div>
<div class="treefoot"></div>
</aside>
<div class="timeline">
<div class="ruler"><div class="span"></div><svg class="ticks"><rect width="100%" height="21" fill="url(#tickmarks)"/></svg>
<div class="secs"><span>0 s</span><span>1 s</span><span>2 s</span><span>3 s</span><span>4 s</span><span>5 s</span><span>6 s</span><span>7 s</span><span>8 s</span><span>9 s</span><span>10 s</span><span>11 s</span><span>12 s</span><span>13 s</span><span>14 s</span><span>15 s</span><span>16 s</span><span>17 s</span><span>18 s</span><span>19 s</span><span>20 s</span><span>21 s</span></div></div>
<div class="lanes">
<div class="lane"></div><div class="lane"></div><div class="lane"></div><div class="lane"></div><div class="lane"></div><div class="lane"></div><div class="lane bar"></div><div class="lane bar"></div><div class="lane bar"></div><div class="lane bar"></div>
<div class="tzoom"><button aria-label="Ajustar"><svg><use href="#zoomfit"/></svg></button><button aria-label="Ampliar"><svg><use href="#zoomc"/></svg></button><button aria-label="Reduzir"><svg><use href="#zoomout"/></svg></button></div>
</div>
<div class="hscroll"><svg class="left"><use href="#chev"/></svg><div><i></i></div><svg class="right"><use href="#chev"/></svg></div>
</div>
</div>
</section>

<nav class="sheets"><div class="nav"><button disabled aria-label="Primeiro">|◂</button><button disabled aria-label="Anterior">◂</button><button disabled aria-label="Próximo">▸</button><button disabled aria-label="Último">▸|</button></div><button>Modelo</button><button>Vistas 3D</button><button class="s1">Estudo de movimento 1</button><button class="sel">Estudo de movimento 2</button><span class="rest"></span></nav>
<div class="sketch"><button aria-label="Ponto"><svg><use href="#point"/></svg></button><button aria-label="Centro"><svg><use href="#circc"/></svg></button><button aria-label="Linha"><svg><use href="#line"/></svg></button><button aria-label="Quadrante"><svg><use href="#circ"/></svg></button><button aria-label="Interseção"><svg><use href="#inter"/></svg></button><button aria-label="Próximo"><svg><use href="#angle"/></svg></button><i class="sep"></i><button aria-label="Tangente"><svg><use href="#tan"/></svg></button><button aria-label="Perpendicular"><svg><use href="#perp"/></svg></button><button aria-label="Paralelo"><svg><use href="#para"/></svg></button><button aria-label="Linhas HV"><svg><use href="#corner"/></svg></button><button aria-label="Pontos HV"><svg><use href="#dots"/></svg></button><i class="sep"></i><button aria-label="Comprimento"><svg><use href="#dim"/></svg></button><button aria-label="Grade"><svg><use href="#gridi"/></svg></button><button aria-label="Ângulo"><svg><use href="#ang"/></svg></button><i class="sep"></i></div>
<footer class="status"><span class="tip">Selecione os componentes para criar contatos e definir os parâmetros</span><span class="state">Subdefinido</span><span class="unit">MMGS</span><i class="caret upc"></i><svg class="tagi"><use href="#tag"/></svg></footer>
</body>
</html>
```
FILE: styles.css
```css
:root {
  --bg: #f7f7f7;
  --gray: #cbcbcb;
  --end: 599px;
  --small: 7px/9px "Open Sans", "Noto Sans", sans-serif;
  --base: 8px/11px Lato, "Open Sans", sans-serif;
}
* { box-sizing: border-box; }
body { margin: 0; height: 100vh; min-height: 640px; display: flex; flex-direction: column; overflow: hidden; background: var(--bg); color: #2b2b2b; font: var(--base); border-bottom: 1px solid #16262e; }
button, input, select { font: inherit; color: inherit; margin: 0; padding: 0; border: 0; background: none; border-radius: 0; white-space: nowrap; }
button { display: flex; align-items: center; justify-content: center; }
h1, h2, h3, p, ul { margin: 0; padding: 0; font: inherit; list-style: none; }
svg { display: block; flex: none; width: 12px; height: 12px; fill: none; stroke: currentColor; stroke-width: 1; }
select {
  appearance: none;
  border: 1px solid #aaa;
  padding-left: 3px;
  background: #e3e3e3 url('data:image/svg+xml,<svg xmlns="http://www.w3.org/2000/svg" width="7" height="5"><path d="m.5.5 3 3 3-3" fill="none" stroke="%23555"/></svg>') no-repeat right 2px center;
}
.sprite { position: absolute; width: 0; height: 0; }
.caret { flex: none; width: 5px; height: 3px; background: #999; clip-path: polygon(0 0, 100% 0, 50% 100%); }
.caret.dark { background: #444; }
.tri { width: 3px; height: 6px; background: #222; clip-path: polygon(0 0, 100% 50%, 0 100%); }
.tri.l { transform: scaleX(-1); }
.dot { width: 5px; height: 5px; border: 1px solid #aaa; border-radius: 50%; background: #e4e4e4; }
.up { transform: scaleY(-1); }

/* Title bar */
.titlebar { flex: none; height: 24px; display: flex; align-items: center; border-top: 1px solid #b0abab; border-bottom: 2px solid #d4d4d4; font: var(--small); }
.brand { display: flex; align-items: center; width: 96px; padding-left: 4px; color: #c9353b; text-decoration: none; font: 8px/11px "Open Sans", sans-serif; }
.brand b { font-weight: 800; }
.ds { width: 14px; height: 14px; margin-right: 2px; stroke-width: 1.4; }
.menus { display: flex; gap: 11px; color: #111; }
.pin { width: 24px; height: 22px; border-right: 1px solid #ccc; color: #555; }
.pin svg { width: 9px; height: 9px; }
.quick { display: flex; align-items: center; padding-left: 13px; color: #b4b4b4; }
.qi { width: 18px; height: 18px; }
.qi svg { width: 13px; height: 13px; }
.home, .wide { width: 20px; }
.quick .caret { margin: 0 3px; }
.qi.dark { color: #444; }
.doc { flex: 1; text-align: center; color: #222; }
.search { display: flex; align-items: center; gap: 4px; width: 166px; height: 15px; padding: 0 3px; margin-right: 2px; background: #fff; border: 1px solid #ccc; color: #666; }
.search input { flex: 1; min-width: 0; outline: 0; }
.search input::placeholder { color: #666; opacity: 1; }
.cmd, .lens { width: 10px; height: 10px; }
.winbtns { display: flex; color: #333; }
.winbtns button { width: 24px; height: 20px; }
.winbtns button:last-child { width: 20px; }
.winbtns svg { width: 11px; height: 11px; stroke-width: 1.3; }
.winbtns .big { width: 13px; height: 13px; }

/* Ribbon */
.ribbon { flex: none; height: 54px; display: flex; border-bottom: 1px solid #999; font: var(--small); color: #b5b5b5; }
.ribbon button { flex: none; flex-direction: column; justify-content: flex-start; gap: 1px; padding-top: 4px; position: relative; }
.ribbon .end { border-right: 1px solid #ccc; }
.ribbon .caret { position: absolute; left: calc(50% - 2px); bottom: 7px; background: #777; }
.ribbon .on { color: #222; }
.w33 { width: 33px; } .w40 { width: 40px; } .w42 { width: 42px; } .w44 { width: 44px; } .w46 { width: 46px; }
.w48 { width: 48px; } .w50 { width: 50px; } .w52 { width: 52px; } .w54 { width: 54px; } .w56 { width: 56px; }
.w60 { width: 60px; } .w64 { width: 64px; }
.ribbon .collapse { margin-left: auto; width: 19px; align-self: flex-end; padding: 0 0 4px; color: #222; }
.collapse svg { width: 8px; height: 8px; transform: scaleY(-1); stroke-width: 2; }

/* Graphics area */
.stage { flex: 1; min-height: 0; position: relative; display: flex; flex-direction: column; }
.model { position: absolute; inset: 0; width: 100%; height: 100%; stroke: none; }
.axis { font: bold 6px/6px "Open Sans", sans-serif; }
.toprow { flex: none; position: relative; height: 20px; display: flex; align-items: flex-start; }
.cmdtabs { display: flex; height: 15px; border-right: 1px solid #888; }
.cmdtabs button { height: 15px; padding: 0 5px 0 6px; background: #d2d2d2; border-left: 1px solid #888; border-bottom: 1px solid #888; }
.cmdtabs .sel { background: var(--bg); font-weight: bold; border: 0; }
.hud { display: flex; align-items: center; height: 20px; margin-left: 93px; }
.hud button { width: 17px; height: 20px; }
.hud svg { width: 14px; height: 14px; }
.hud .caret { width: 4px; margin: 0 3px; }
.docbtns { display: flex; margin-left: auto; padding-right: 3px; color: #8b929a; }
.docbtns button { width: 18px; height: 20px; }
.docbtns svg { width: 10px; height: 10px; stroke-width: 1.3; }

/* Property panel */
.work { flex: 1; min-height: 0; display: flex; position: relative; }
.panel { flex: none; width: 154px; margin-top: -5px; display: flex; flex-direction: column; background: var(--bg); border-right: 1px solid #c4c4c4; }
.grip { flex: none; height: 14px; display: flex; align-items: center; justify-content: center; border-bottom: 1px solid #ccc; }
.ptabs { flex: none; display: flex; height: 17px; background: #d2d2d2; border-top: 1px solid #aaa; }
.ptabs button { width: 27px; height: 16px; border-right: 1px solid #aaa; border-bottom: 1px solid #aaa; }
.ptabs .sel { background: var(--bg); border-bottom: 0; }
.ptabs button:nth-child(5) { width: 22px; }
.ptabs .arr { width: 12px; background: var(--bg); }
.ptitle { flex: none; display: flex; align-items: center; height: 22px; padding: 0 8px 0 5px; gap: 4px; color: #445; }
.ptitle h2 { flex: 1; font-weight: bold; color: #444; }
.ptitle button svg { width: 10px; height: 10px; color: #345f7c; }
.okrow { flex: none; display: flex; height: 21px; padding: 2px 0 0 3px; gap: 7px; align-items: flex-start; }
.okrow svg { width: 11px; height: 11px; }
.ok { color: #2f9b2f; }
.no { color: #d0342c; }
.no svg { stroke-width: 2.4; }
.pscroll { flex: 1; min-height: 0; display: flex; }
.pbody { flex: 1; min-width: 0; overflow: hidden; padding: 0 3px 0 2px; }
.pbody section { border-top: 1px solid #bbb; }
.pbody h3 { display: flex; align-items: center; justify-content: space-between; height: 18px; padding: 0 2px 0 3px; font-weight: bold; color: #555; }
.pbody h3 .up { width: 8px; height: 8px; stroke-width: 2; }
.msg { height: 50px; margin-bottom: 2px; padding: 0 2px 0 3px; background: #ffff80; font: var(--small); color: #222; white-space: nowrap; }
.chk { display: flex; align-items: center; gap: 2px; font: var(--small); }
.selsec .chk { padding-left: 20px; height: 9px; }
.chk input { appearance: none; width: 9px; height: 9px; border: 1px solid #777; background: #fff; position: relative; }
.chk input:checked::after { content: ""; position: absolute; left: 1px; top: 1px; width: 5px; height: 3px; border: solid #444; border-width: 0 0 1px 1px; transform: rotate(-45deg); }
.note { font: var(--small); padding-left: 20px; margin-bottom: 14px; }
.pick { display: flex; align-items: flex-start; gap: 4px; padding-left: 4px; }
.pick ul { width: 109px; height: 51px; padding: 1px 0 0 3px; border: 1px solid #58a6dc; border-left: 8px solid #52a5ee; background: #cde4f6; color: #222; }
.pick .pink { height: 59px; background: #fff; border-color: #aaa; border-left-color: #fb84bd; }
.pbody > section > .dot { display: block; margin: 1px 0 0 76px; }
.pbody .second { margin-top: 4px; }
.selsec .note:last-child { margin: 3px 0 5px; }
.matsec h3 .chk { gap: 4px; font: inherit; }
.matrow { display: flex; gap: 4px; padding-left: 4px; margin-top: 1px; }
.matrow select { width: 109px; height: 14px; }
.vscroll { flex: none; width: 14px; display: flex; flex-direction: column; align-items: center; padding: 2px 2px 2px 0; color: #333; }
.vscroll svg, .tscroll svg { width: 8px; height: 8px; stroke-width: 2; }
.vscroll i { width: 10px; height: 146px; margin: 1px 0 auto; background: #a9a9a9; }

/* View overlays */
.view { flex: 1; position: relative; }
.crumb { display: flex; align-items: center; gap: 10px; height: 10px; padding-left: 4px; color: #8a8a30; width: max-content; }
.crumb svg { width: 12px; height: 12px; }
.crumb span { margin-left: -8px; }
.handle { position: absolute; left: -2px; top: 171px; width: 6px; height: 27px; display: flex; align-items: center; background: var(--bg); border: 1px solid #bbb; border-left: 0; }
.handle .dot { width: 4px; height: 4px; }
.pointer { position: absolute; left: -10px; top: 192px; width: 9px; height: 14px; }
.vok, .vno { position: absolute; }
.vok { right: 50px; top: 4px; }
.vok svg { width: 19px; height: 16px; stroke: none; }
.vno { right: 22px; top: 23px; }
.vno svg { width: 17px; height: 17px; stroke: none; }
.task { position: absolute; right: 0; top: 14px; border: 1px solid #999; border-right: 0; color: #333; }
.task button { width: 16px; height: 16px; background: #d4d4d4; border-bottom: 1px solid #999; }
.task .sel { background: #fff; }
.task svg { width: 13px; height: 13px; }
.task .teal { color: #234f63; stroke-width: 1.6; }

/* Motion study */
.motion { flex: none; border-top: 1px solid #cfd6da; }
.mtools { display: flex; align-items: center; height: 17px; color: #b0b0b0; padding-left: 2px; }
.mtools button { flex: none; width: 18px; height: 17px; }
.mtools svg { width: 13px; height: 13px; }
.mtools select { color: #333; height: 14px; }
.study { width: 99px; margin-right: 5px; padding-left: 2px; font: var(--small); }
.seek { appearance: none; width: 124px; height: 12px; margin: 0 5px; background: linear-gradient(#d0d0d0 0 0) no-repeat 0 5px / 100% 2px; }
.seek::-webkit-slider-thumb { appearance: none; width: 7px; height: 12px; background: #b8b8b8; clip-path: polygon(0 0, 100% 0, 100% 70%, 50% 100%, 0 70%); }
.speed { position: relative; }
.mtools .speed select { display: block; width: 53px; height: 15px; background-color: #fff; border-color: #7a8fa3; color: transparent; }
.speed mark { position: absolute; left: 3px; top: 2px; font: 8px/10px Lato, sans-serif; background: #0a6fc2; color: #fff; }
.mtools .caret { margin: 0 2px; }
.sep { flex: none; width: 1px; height: 14px; margin: 0 2px; background: #bbb; }
.last { margin-left: auto; }
.mtools .dk { color: #444; width: 20px; }
.mtools .chv { width: 8px; height: 8px; stroke-width: 2; }
.mbody { display: flex; }
.tree { flex: none; width: 158px; border-right: 2px solid #999; border-left: 1px solid #bbb; }
.filters { display: flex; justify-content: flex-end; height: 21px; padding: 1px 2px 3px 0; background: var(--gray); }
.filters button { width: 18px; height: 17px; }
.filters svg { width: 13px; height: 13px; }
.filters .on { background: #b4b4b4; border: 1px solid #777; }
.treebody { display: flex; height: 137px; }
.tscroll { width: 12px; background: #eee; display: flex; flex-direction: column; align-items: center; padding: 2px 0; color: #333; }
.tscroll i { width: 10px; height: 29px; margin: 11px 0 auto; background: #c8c8c8; }
.rows { flex: 1; min-width: 0; overflow: hidden; }
.rows, .lanes { display: grid; grid-template-rows: repeat(9, 1fr) 5px; height: 137px; }
.rows li { display: flex; align-items: center; gap: 3px; padding-left: 48px; white-space: nowrap; overflow: hidden; color: #333; min-height: 0; }
.rows svg { width: 12px; height: 12px; }
.rows .out { padding-left: 33px; }
.rows .dim { color: #999; }
.rows li:last-child { align-items: flex-start; }
.treefoot { height: 11px; background: var(--gray); }
.timeline { flex: 1; min-width: 0; }
.ruler { position: relative; height: 21px; padding-left: 34px; background: var(--gray); overflow: hidden; }
.span { position: absolute; left: 34px; top: 0; width: var(--end); height: 21px; background: #ffff7d; border-right: 1px solid #555; }
.ticks { position: absolute; left: 34px; top: 0; width: 100%; height: 21px; }
.secs { position: relative; display: flex; font: 600 8px/13px "Open Sans", sans-serif; color: #555; }
.secs span { flex: none; width: 51px; padding-left: 1px; }
.lanes { position: relative; overflow: hidden; background: repeating-linear-gradient(to right, #c9c9c9 0 1px, transparent 1px 51px) 34px 0 no-repeat; }
.lanes::after { content: ""; position: absolute; left: calc(33px + var(--end)); top: 0; bottom: 0; width: 1px; background: #555; }
.lane { display: flex; align-items: center; padding-left: 30px; overflow: hidden; }
.lane::before { content: ""; position: relative; z-index: 1; width: 7px; height: 12px; background: #0b0bd8; clip-path: polygon(50% 0, 100% 50%, 50% 100%, 0 50%); }
.bar::after { content: ""; width: var(--end); height: 10px; margin-left: -4px; background: #ccae4b; }
.lane:nth-child(10) { align-items: flex-start; padding-top: 2px; }
.tzoom { position: absolute; right: 2px; bottom: 0; display: flex; background: #c9c9c9; }
.tzoom button { width: 18px; height: 17px; }
.tzoom svg { width: 13px; height: 13px; }
.hscroll { display: flex; align-items: center; height: 11px; background: #eee; color: #333; }
.hscroll svg { width: 7px; height: 7px; margin: 0 2px; stroke-width: 2; }
.hscroll div { flex: 1; }
.hscroll i { display: block; width: 91%; height: 10px; background: var(--gray); }
.left { transform: rotate(90deg); }
.right { transform: rotate(-90deg); }

/* Study tabs, sketch snaps, status bar */
.sheets { flex: none; display: flex; height: 12px; }
.sheets > button { padding: 0 8px 0 7px; border-right: 1px solid #bbb; border-top: 1px solid #999; background: #ededed; font: 8px/10px Lato, sans-serif; }
.nav { display: flex; background: #bbb; }
.nav button { width: 11px; font: 6px/10px "DejaVu Sans", sans-serif; color: #888; border-right: 1px solid #999; }
.sheets > .s1 { background: #ddd; }
.sheets > .sel { padding: 0 10px 0 4px; font-weight: bold; background: var(--bg); border-top-color: var(--bg); }
.rest { flex: 1; border-top: 1px solid #999; }
.sketch { flex: none; height: 21px; display: flex; align-items: center; padding-left: 5px; margin-left: 3px; border-left: 1px dotted #aaa; color: #b7b7b7; }
.sketch button { width: 18px; height: 20px; }
.sketch svg { width: 14px; height: 14px; stroke-width: 1.3; }
.status { flex: none; display: flex; align-items: center; height: 13px; border-top: 1px solid #999; color: #222; }
.tip { flex: 1; }
.state { width: 144px; }
.unit { width: 46px; color: #aaa; }
.upc { transform: scaleY(-1); margin-right: 18px; background: #777; }
.tagi { width: 11px; height: 11px; margin-right: 2px; }
```
